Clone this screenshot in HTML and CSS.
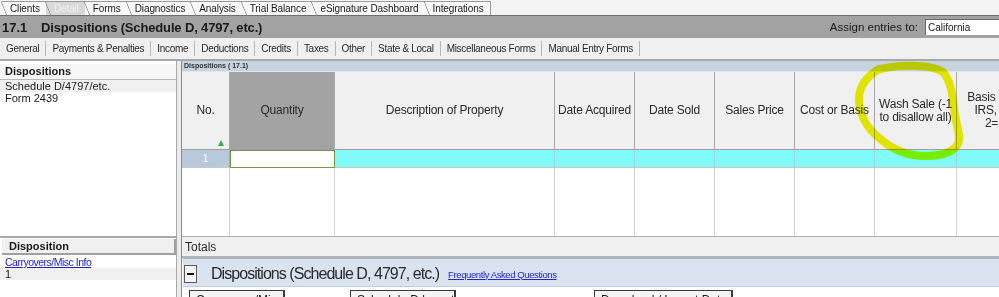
FILE: index.html
```html
<!DOCTYPE html>
<html>
<head>
<meta charset="utf-8">
<link rel="stylesheet" href="styles.css">
</head>
<body>
<div class="app">
  <div class="tabs">
    <span class="tab first">Clients</span>
    <span class="tab sel">Detail</span>
    <span class="tab">Forms</span>
    <span class="tab">Diagnostics</span>
    <span class="tab">Analysis</span>
    <span class="tab">Trial Balance</span>
    <span class="tab">eSignature Dashboard</span>
    <span class="tab">Integrations</span>
  </div>
  <div class="titlebar">
    <span class="tnum">17.1</span>
    <span class="ttext">Dispositions (Schedule D, 4797, etc.)</span>
    <span class="assign">Assign entries to:</span>
    <span class="assign-box">California</span>
  </div>
  <div class="nav">
    <span class="nav-item">General</span>
    <span class="nav-item">Payments &amp; Penalties</span>
    <span class="nav-item">Income</span>
    <span class="nav-item">Deductions</span>
    <span class="nav-item">Credits</span>
    <span class="nav-item">Taxes</span>
    <span class="nav-item">Other</span>
    <span class="nav-item">State &amp; Local</span>
    <span class="nav-item">Miscellaneous Forms</span>
    <span class="nav-item">Manual Entry Forms</span>
  </div>
  <div class="main">
    <div class="left">
      <div class="left-top">
        <div class="lhead">Dispositions</div>
        <div class="lrow hl">Schedule D/4797/etc.</div>
        <div class="lrow">Form 2439</div>
      </div>
      <div class="left-bottom">
        <div class="lhead2">Disposition</div>
        <div class="lrow link">Carryovers/Misc Info</div>
        <div class="lrow hl">1</div>
      </div>
    </div>
    <div class="splitter"></div>
    <div class="right">
      <div class="strip">Dispositions ( 17.1)</div>
      <div class="grid">
        <div class="hc no">No.<span class="sort"></span></div>
        <div class="hc qty">Quantity</div>
        <div class="hc">Description of Property</div>
        <div class="hc">Date Acquired</div>
        <div class="hc">Date Sold</div>
        <div class="hc">Sales Price</div>
        <div class="hc">Cost or Basis</div>
        <div class="hc">Wash Sale (-1<br>to disallow all)</div>
        <div class="hc basis">Basis reported<br>IRS, 1=yes,<br>2=none</div>

        <div class="rc rno">1</div>
        <div class="rc rqty"></div>
        <div class="rc cy"></div>
        <div class="rc cy"></div>
        <div class="rc cy"></div>
        <div class="rc cy"></div>
        <div class="rc cy"></div>
        <div class="rc cy"></div>
        <div class="rc cy"></div>

        <div class="ec"></div><div class="ec"></div><div class="ec"></div>
        <div class="ec"></div><div class="ec"></div><div class="ec"></div>
        <div class="ec"></div><div class="ec"></div><div class="ec"></div>
      </div>
      <div class="totals">Totals</div>
      <div class="section">
        <span class="minus"></span>
        <span class="stitle">Dispositions (Schedule D, 4797, etc.)</span>
        <span class="faq">Frequently Asked Questions</span>
      </div>
      <div class="buttons">
        <span class="btn b1">Carryovers/Misc</span>
        <span class="btn b2">Schedule D layout</span>
        <span class="btn b3">Download / Import Data</span>
      </div>
    </div>
  </div>
  <svg class="mark" width="999" height="297" viewBox="0 0 999 297">
    <path d="M 877 70 C 900 63, 933 65, 943 72 C 952 82, 953 100, 955 115 C 957 127, 961 137, 958 144 C 954 151, 944 156, 925 156 C 906 156, 890 148, 878 137 C 866 127, 859 113, 859 99 C 859 87, 866 77, 879 69" fill="none" stroke="#eef200" stroke-width="8" stroke-linecap="round" stroke-linejoin="round"/>
  </svg>
</div>
</body>
</html>
```
FILE: styles.css
```css
* { box-sizing: border-box; }
html, body { margin: 0; padding: 0; }
body {
  width: 999px;
  height: 297px;
  overflow: hidden;
  background: #f0f0f0;
  font-family: "Liberation Sans", Arial, sans-serif;
  color: #1a1a1a;
}
.app {
  position: relative;
  width: 999px;
  height: 297px;
  display: flex;
  flex-direction: column;
}

/* top tabs */
.tabs {
  height: 16px;
  flex-shrink: 0;
  display: flex;
  align-items: flex-end;
  padding-left: 2px;
  background: #f4f4f4;
  border-bottom: 1px solid #6e6e6e;
}
.tab {
  position: relative;
  height: 14px;
  line-height: 13px;
  font-size: 10px;
  padding: 0 6px 0 8px;
  margin-right: -1px;
  border-top: 1px solid #9a9a9a;
  border-right: 1px solid #9a9a9a;
  background: #f8f8f8;
  color: #1a1a1a;
  white-space: nowrap;
  letter-spacing: -0.1px;
}
.tab::before {
  content: "";
  position: absolute;
  left: -1px;
  top: -1px;
  width: 6px;
  height: 15px;
  background: linear-gradient(to top right, transparent calc(50% - 0.7px), #8a8a8a 50%, transparent calc(50% + 0.7px));
}
.tab.sel {
  background: #d8d8d8;
  color: #f2f2f2;
}

/* title bar */
.titlebar {
  height: 22px;
  flex-shrink: 0;
  background: #a2a2a2;
  display: flex;
  align-items: center;
  padding-left: 2px;
  font-size: 13px;
}
.tnum { font-weight: bold; width: 39px; }
.ttext { font-weight: bold; letter-spacing: -0.15px; }
.assign {
  margin-left: auto;
  font-size: 11.5px;
  color: #1a1a1a;
  margin-right: 7px;
}
.assign-box {
  width: 74px;
  height: 16px;
  background: #fff;
  border-top: 1px solid #6a6a6a;
  border-left: 1px solid #6a6a6a;
  font-size: 10px;
  line-height: 15px;
  padding-left: 2px;
}

/* nav */
.nav {
  height: 23px;
  flex-shrink: 0;
  display: flex;
  align-items: center;
  background: #f0f0f0;
  border-bottom: 2px solid #a8a8a8;
  font-size: 10px;
  color: #2a2a2a;
}
.nav-item {
  padding: 0 6px 0 6px;
  border-right: 1px solid #b8b8b8;
  line-height: 15px;
  letter-spacing: -0.3px;
}

/* main */
.main {
  flex: 1;
  display: flex;
  min-height: 0;
  background: #fff;
}
.left {
  width: 177px;
  display: flex;
  flex-direction: column;
  background: #fff;
  border-right: 1px solid #a8a8a8;
}
.left-top { flex: 1; padding-top: 3px; }
.lhead {
  font-weight: bold;
  font-size: 11px;
  height: 16px;
  line-height: 14px;
  padding-left: 5px;
  border-bottom: 1px solid #b8b8b8;
  background: #f6f6f6;
}
.lrow {
  font-size: 11px;
  height: 12px;
  line-height: 12px;
  padding-left: 5px;
}
.lrow.hl { background: #f0f0f0; }
.lrow.link { color: #2222cc; text-decoration: underline; font-size: 10.5px; letter-spacing: -0.5px; }
.left-bottom {
  height: 61px;
  flex-shrink: 0;
  border-top: 2px solid #a8a8a8;
  padding-top: 1px;
}
.lhead2 {
  font-weight: bold;
  font-size: 11px;
  height: 16px;
  line-height: 15px;
  padding-left: 7px;
  background: #f0f0f0;
  border-bottom: 2px solid #a0a0a0;
  border-right: 2px solid #a0a0a0;
  margin-left: 2px;
  margin-bottom: 1px;
}
.splitter {
  width: 5px;
  background: #ececec;
  border-right: 1px solid #8a8a8a;
}
.right {
  flex: 1;
  display: flex;
  flex-direction: column;
  min-width: 0;
  overflow: hidden;
}
.strip {
  height: 11px;
  flex-shrink: 0;
  background: #c8d3e0;
  font-size: 7px;
  font-weight: bold;
  line-height: 10px;
  padding-left: 2px;
  color: #333;
  border-bottom: 1px solid #dfe6ee;
}
.grid {
  flex-shrink: 0;
  display: grid;
  grid-template-columns: 48px 105px 220px 80px 80px 80px 80px 82px 96px;
  grid-template-rows: 78px 18px 68px;
  width: 871px;
}
.hc {
  position: relative;
  background: #f0f0f0;
  border-right: 1px solid #a8a8a8;
  border-bottom: 1px solid #a0a0a0;
  display: flex;
  align-items: center;
  justify-content: center;
  text-align: center;
  font-size: 12px;
  line-height: 13px;
  color: #2a2a2a;
  letter-spacing: -0.2px;
}
.hc.qty { background: #a3a3a3; }
.hc.basis { white-space: nowrap; }
.sort {
  position: absolute;
  right: 5px;
  bottom: 3px;
  width: 0;
  height: 0;
  border-left: 3px solid transparent;
  border-right: 3px solid transparent;
  border-bottom: 6px solid #2fb24a;
}
.rc {
  border-right: 1px solid #c8c8c8;
  border-bottom: 1px solid #c8c8c8;
}
.rc.rno {
  background: #b9c8da;
  color: #fff;
  font-size: 11px;
  text-align: center;
  line-height: 17px;
  border-right-color: #a8a8a8;
}
.rc.rqty {
  background: #fff;
  border: 1px solid #6f9a42;
}
.rc.cy { background: #80fafa; border-right-color: #9ad8d8; }
.ec {
  border-right: 1px solid #d4d4d4;
}
.totals {
  height: 22px;
  flex-shrink: 0;
  background: #f0f0f0;
  border-top: 1px solid #b0b0b0;
  border-bottom: 2px solid #b4b4b4;
  font-size: 12px;
  line-height: 21px;
  padding-left: 3px;
  color: #2a2a2a;
}
.section {
  height: 29px;
  flex-shrink: 0;
  background: #d9e4f0;
  border-top: 1px solid #a8b8cc;
  border-bottom: 1px solid #c0cedd;
  display: flex;
  align-items: center;
  padding-left: 1px;
  padding-top: 3px;
  margin-left: 1px;
}
.minus {
  width: 13px;
  height: 18px;
  border: 1px solid #5a5a5a;
  background: #f4f4f4;
  position: relative;
  margin-right: 14px;
}
.minus::after {
  content: "";
  position: absolute;
  left: 2px;
  right: 2px;
  top: 7px;
  height: 2px;
  background: #111;
}
.stitle {
  font-size: 16px;
  color: #2a2a2a;
  letter-spacing: -0.95px;
  margin-right: 9px;
}
.faq {
  font-size: 9.5px;
  color: #2424cc;
  text-decoration: underline;
  letter-spacing: -0.4px;
}
.buttons {
  flex: 1;
  min-height: 0;
  background: #fff;
  display: flex;
  align-items: flex-start;
  padding-top: 3px;
}
.btn {
  flex-shrink: 0;
  height: 20px;
  border: 1px solid #3a3a3a;
  border-right-width: 2px;
  background: #f4f4f4;
  font-size: 12px;
  line-height: 18px;
  padding-left: 6px;
  color: #1a1a1a;
  white-space: nowrap;
  overflow: hidden;
}
.b1 { width: 96px; margin-left: 7px; }
.b2 { width: 106px; margin-left: 65px; }
.b3 { width: 139px; margin-left: 138px; }

.mark {
  position: absolute;
  left: 0;
  top: 0;
  pointer-events: none;
  mix-blend-mode: multiply;
}
```
